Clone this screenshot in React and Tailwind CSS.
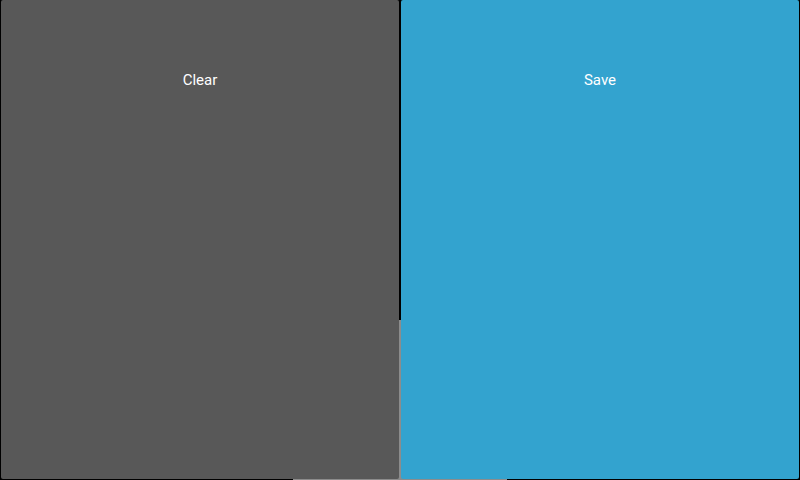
import React from "react";

export default function App() {
  return (
    <div
      className="relative w-[800px] h-[480px] bg-black overflow-hidden"
      style={{ fontFamily: "Roboto, 'Liberation Sans', sans-serif" }}
    >
      {/* backdrop strip peeking out behind the buttons */}
      <div className="absolute left-[293px] top-[320px] w-[214px] h-[160px] bg-[#8c8c8c]" />

      <div className="relative flex gap-[2px] px-[1px] h-[479px]">
        <button className="flex-1 flex justify-center pt-[69px] bg-[#585858] text-white text-[15px] rounded-[2px]">
          Clear
        </button>
        <button className="flex-1 flex justify-center pt-[69px] bg-[#33a3cf] text-white text-[15px] rounded-[2px]">
          Save
        </button>
      </div>
    </div>
  );
}
